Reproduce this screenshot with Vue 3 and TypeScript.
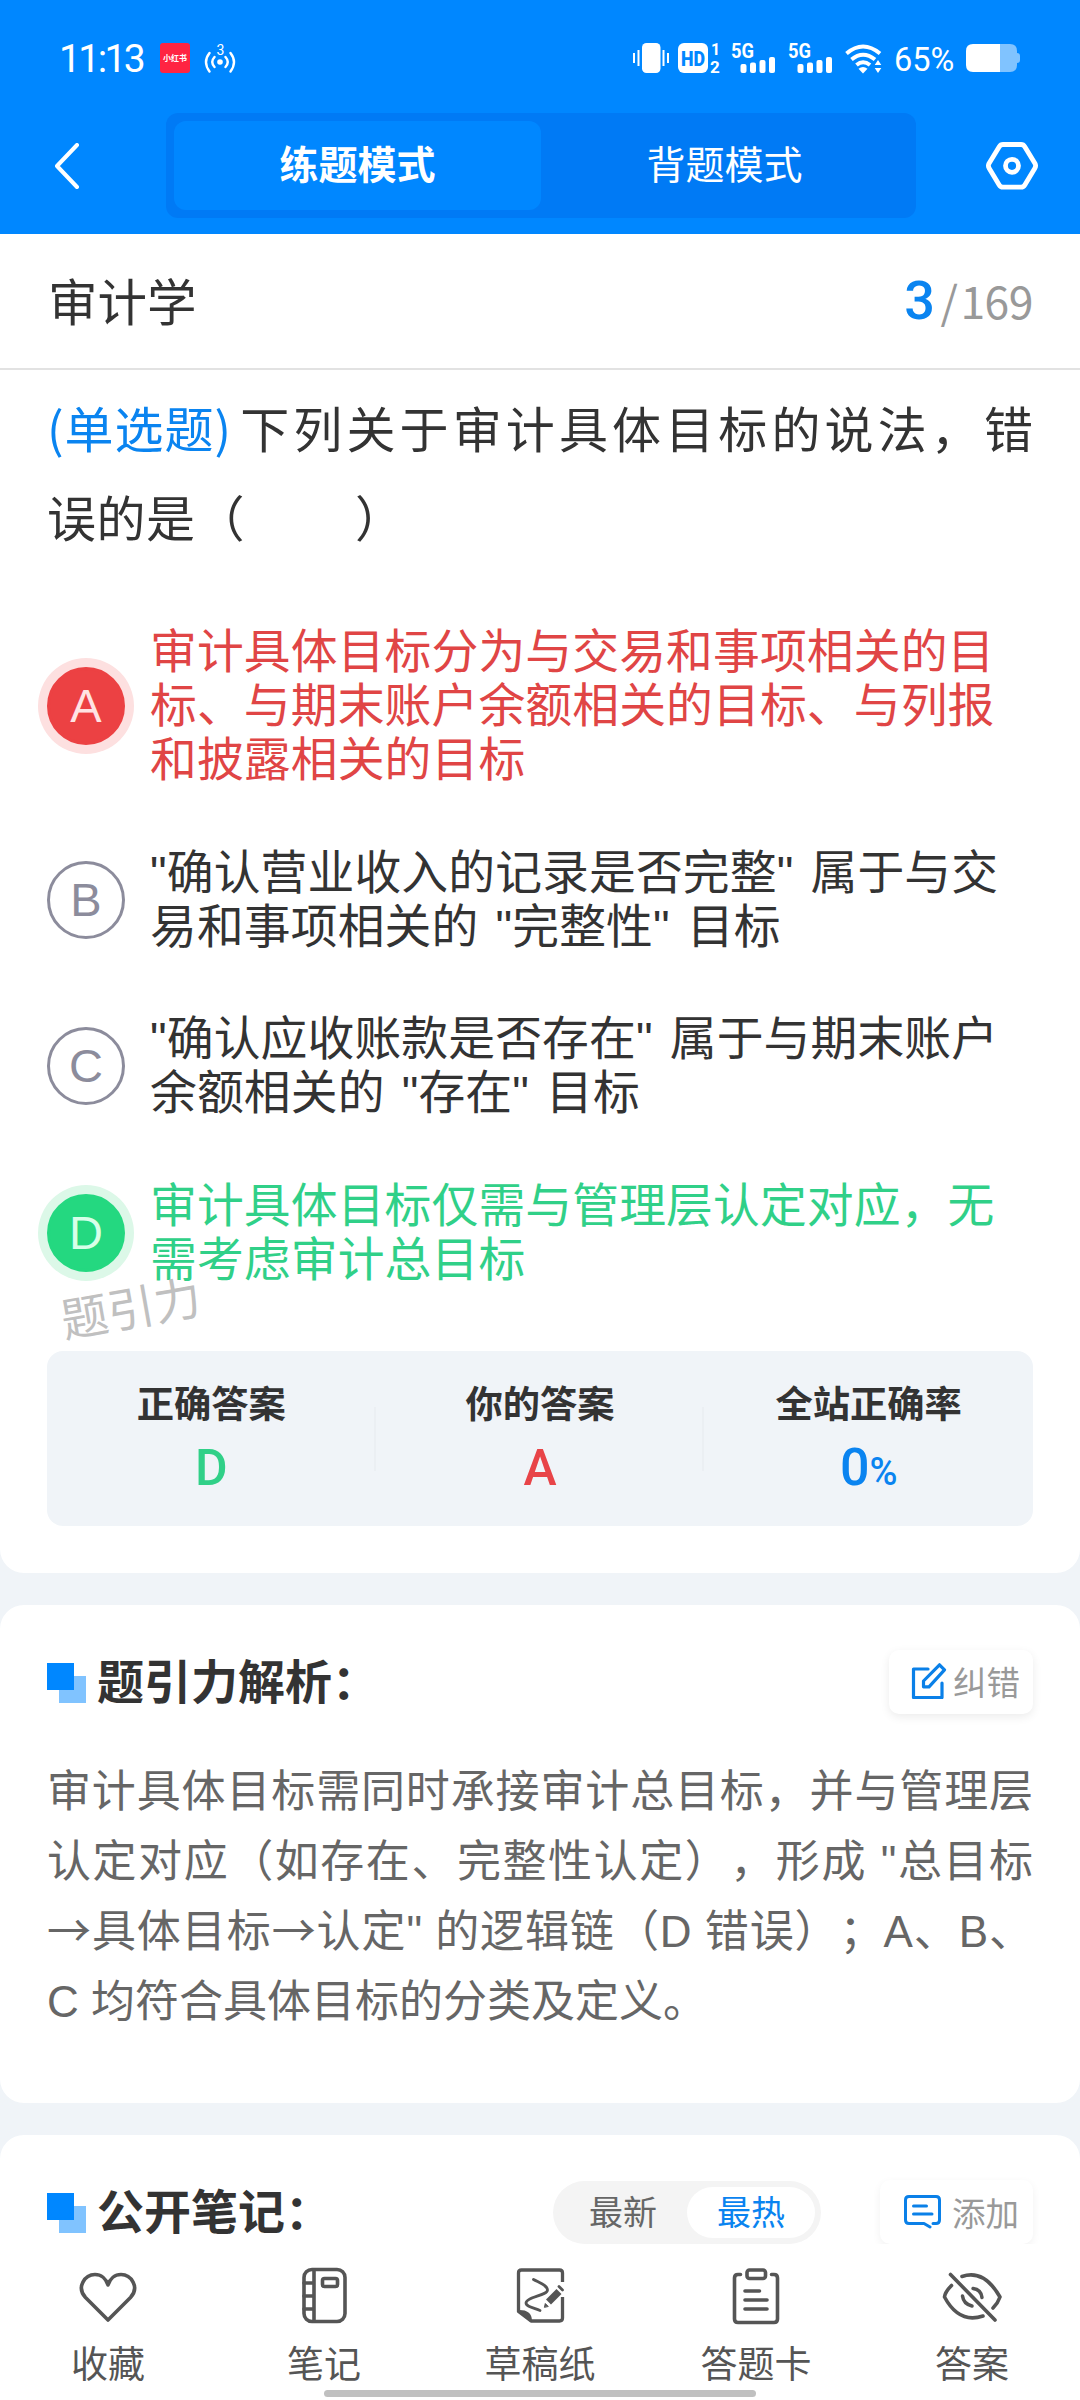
<script setup lang="ts">
interface Option {
  key: string
  state: 'wrong' | 'right' | 'plain'
  lines: string[]
}

const options: Option[] = [
  {
    key: 'A',
    state: 'wrong',
    lines: ['审计具体目标分为与交易和事项相关的目', '标、与期末账户余额相关的目标、与列报', '和披露相关的目标'],
  },
  { key: 'B', state: 'plain', lines: ['"确认营业收入的记录是否完整" 属于与交', '易和事项相关的 "完整性" 目标'] },
  { key: 'C', state: 'plain', lines: ['"确认应收账款是否存在" 属于与期末账户', '余额相关的 "存在" 目标'] },
  { key: 'D', state: 'right', lines: ['审计具体目标仅需与管理层认定对应，无', '需考虑审计总目标'] },
]
const signals = [0, 1]
</script>

<template>
  <div class="screen">
    <header class="top">
      <div class="status">
        <div class="status-left">
          <span class="time">11:13</span>
          <span class="app-badge">小红书</span>
          <svg class="hotspot" width="32" height="34" viewBox="0 -2 32 34" fill="none" stroke="#fff" stroke-width="2.4" stroke-linecap="round">
            <circle cx="16" cy="19" r="2.8" fill="#fff" stroke="none" />
            <path d="M10.500 14q-4.500 5 0 10M21.500 14q4.500 5 0 10M5.500 10q-7 9 0 18.500M26.500 10q7 9 0 18.500" />
            <text x="16.500" y="11.500" font-size="14" text-anchor="middle" fill="#fff" stroke="none" font-family="Roboto, sans-serif">3</text>
          </svg>
        </div>
        <div class="status-right">
          <svg width="36" height="32" viewBox="0 0 36 32" fill="#fff">
            <rect x="9" y="1" width="18.500" height="30" rx="4.500" />
            <path d="M0 11h2v10H0zM4.500 8h2v16h-2zM29.500 8h2v16h-2zM34 11h2v10h-2z" />
          </svg>
          <svg class="hd" width="44" height="36" viewBox="0 -2 44 36" font-family="Roboto, sans-serif" font-weight="900">
            <rect x="0" y="1" width="30" height="30" rx="6" fill="#fff" />
            <text x="15" y="23.500" font-size="20" text-anchor="middle" textLength="24" lengthAdjust="spacingAndGlyphs" fill="#0087ff">HD</text>
            <text x="33" y="13" font-size="16" font-weight="700" fill="#fff">1</text>
            <text x="32" y="31" font-size="17" font-weight="700" fill="#fff">2</text>
          </svg>
          <svg v-for="s in signals" :key="s" class="signal" width="44" height="40" viewBox="0 -4 44 40" fill="#fff">
            <text x="0" y="15.500" font-size="20" font-weight="700" textLength="23" lengthAdjust="spacingAndGlyphs" font-family="Roboto, sans-serif">5G</text>
            <rect x="9.500" y="22" width="6" height="9" rx="2" />
            <rect x="19" y="20.500" width="6" height="10.500" rx="2" />
            <rect x="28.500" y="18" width="6" height="13" rx="2" />
            <rect x="38" y="15" width="6" height="16" rx="2" />
          </svg>
          <svg class="wifi" width="38" height="32" viewBox="0 0 38 32" fill="none" stroke="#fff" stroke-width="4">
            <path d="M1.500 11.500Q18 -2.500 35 11.500" />
            <path d="M6.500 17.500Q18 8 30 17.500" />
            <path d="M11.500 23Q18 17.500 25 23" />
            <path d="M13.500 26.800q4.500-3.500 9 0L18 31.500z" fill="#fff" stroke="none" />
            <path d="M33 18l3.300 5h-6.600zM33 31l3.300-5h-6.600z" fill="#fff" stroke="none" />
          </svg>
          <span class="percent">65%</span>
          <svg width="54" height="28" viewBox="0 0 54 28">
            <path d="M34 0h10q7 0 7 7v2q3 0 3 3v4q0 3-3 3v2q0 7-7 7H34z" fill="#80c3ff" />
            <path d="M7 0h27v28H7q-7 0-7-7V7q0-7 7-7z" fill="#fff" />
          </svg>
        </div>
      </div>
      <div class="nav">
        <svg class="back" width="26" height="46" viewBox="0 0 26 46" fill="none" stroke="#fff" stroke-width="4" stroke-linecap="round" stroke-linejoin="round">
          <path d="M23 2L3 23l20 21" />
        </svg>
        <div class="modes">
          <span class="mode active">练题模式</span>
          <span class="mode">背题模式</span>
        </div>
        <svg class="gear" width="54" height="50" viewBox="0 0 54 50" fill="none" stroke="#fff" stroke-width="4.800" stroke-linejoin="round">
          <path d="M18 3.500h18q2.500 0 3.800 2.200L50 22.500q1.200 2.200 0 4.500L39.800 44q-1.300 2.200-3.800 2.200H18q-2.500 0-3.800-2.200L4 27q-1.200-2.300 0-4.500L14.200 5.700Q15.500 3.500 18 3.500z" />
          <circle cx="27" cy="24.800" r="6.500" />
        </svg>
      </div>
    </header>

    <main class="content">
      <div class="subject">
        <span>审计学</span>
        <span class="progress"><b>3</b><i>/</i>169</span>
      </div>

      <section class="card question">
        <div class="stem">
          <div class="line full"><span class="kind">(单选题)</span>下列关于审计具体目标的说法，错</div>
          <div class="line last">误的是（<span class="blank"></span>）</div>
        </div>
        <ul class="options">
          <li v-for="o in options" :key="o.key" :class="['option', o.state]">
            <span class="mark">{{ o.key }}</span>
            <div class="text">
              <div v-for="l in o.lines" :key="l">{{ l }}</div>
            </div>
          </li>
        </ul>
        <div class="result">
          <span class="watermark">题引力</span>
          <div class="cell"><b>正确答案</b><span class="value green">D</span></div>
          <div class="cell"><b>你的答案</b><span class="value red">A</span></div>
          <div class="cell"><b>全站正确率</b><span class="value blue">0<small>%</small></span></div>
        </div>
      </section>

      <section class="card analysis">
        <div class="head">
          <span class="squares"></span>
          <h2>题引力解析：</h2>
          <button class="action">
            <svg width="36" height="36" viewBox="0 0 36 36" fill="none" stroke="#0a80e8" stroke-width="3.200" stroke-linejoin="round" stroke-linecap="round">
              <path d="M17 6H2.500v28.500H31V20" />
              <path d="M28.500 1.800l5 5L18 23.800h-5.500V18z" />
            </svg>
            纠错
          </button>
        </div>
        <div class="para">
          <div class="full">审计具体目标需同时承接审计总目标，并与管理层</div>
          <div class="full">认定对应（如存在、完整性认定），形成 "总目标</div>
          <div class="full"><span class="cjk">→具体目标→认定</span>" 的逻辑链（D 错误）；A、B、</div>
          <div>C 均符合具体目标的分类及定义。</div>
        </div>
      </section>

      <section class="card notes">
        <div class="head">
          <span class="squares"></span>
          <h2>公开笔记：</h2>
          <div class="sort"><span>最新</span><span class="on">最热</span></div>
          <button class="action add">
            <svg width="37" height="34" viewBox="0 0 37 34" fill="none" stroke="#0a80e8" stroke-width="3" stroke-linejoin="round" stroke-linecap="round">
              <path d="M29 28.500h3q3.500 0 3.500-3.500V5q0-3.500-3.500-3.500H5Q1.500 1.500 1.500 5v20q0 3.500 3.500 3.500h15l6 3.500" />
              <path d="M9.500 11h13M9.500 19h18.500" />
            </svg>
            添加
          </button>
        </div>
      </section>
    </main>

    <footer class="tabs">
      <div class="tab">
        <svg width="60" height="60" viewBox="0 0 60 60">
          <path d="M30 54L7.500 31.500C-2 21 7 8.500 17 8.500c6 0 11 4 13 10.500 2-6.500 7-10.500 13-10.500 10 0 19 12.500 9.500 23z" />
        </svg>
        <span>收藏</span>
      </div>
      <div class="tab">
        <svg width="60" height="60" viewBox="0 0 60 60">
          <rect x="10" y="3.500" width="41" height="52" rx="8" />
          <path d="M20 4v51M10 17h10M10 30h10M10 43h10" />
          <rect x="28.500" y="12.500" width="15" height="8" rx="2" />
        </svg>
        <span>笔记</span>
      </div>
      <div class="tab">
        <svg width="60" height="60" viewBox="0 0 60 60">
          <path d="M52.500 16V7q0-3-3-3H11.500q-3 0-3 3v38.500L21 55h28.500q3 0 3-3V31" stroke-width="3.300" stroke-linecap="butt" />
          <path d="M8.500 45q12.500-.500 12.500 10z" fill="#555" stroke-width="2" />
          <path d="M23.500 13.500C30 17 37.500 19.500 37.500 24c0 5.500-21.500 7-21.500 13 0 3.500 8 5 14 7.500" stroke-width="2.800" />
          <path d="M38.500 36L49 25.500" stroke-width="7" stroke-linecap="butt" />
          <path d="M49 20.500l3.500 3.500" stroke-width="2.800" />
          <path d="M34.500 41l.8-3.500 2.700 2.700z" fill="#555" stroke-width="1" />
        </svg>
        <span>草稿纸</span>
      </div>
      <div class="tab">
        <svg width="60" height="60" viewBox="0 0 60 60">
          <path d="M14.500 8.500H12q-3.500 0-3.500 3.500v41q0 3.500 3.500 3.500h36q3.500 0 3.500-3.500V12q0-3.500-3.500-3.500h-2.500" />
          <rect x="21" y="4" width="18.500" height="8.500" rx="2.500" />
          <path d="M19 25h14.500M19 34h22M19 43h22" />
        </svg>
        <span>答题卡</span>
      </div>
      <div class="tab">
        <svg width="60" height="60" viewBox="0 0 60 60">
          <path d="M20 10.500Q42 3 58 31 56 37 51 42M9.500 19.500Q3 26 2.500 31 17 58 41 50" />
          <path d="M31 22.500q8 1 9 9M20.500 30q1 8 9.500 10" stroke-width="3.500" />
          <path d="M8.500 8.500L53 54" />
        </svg>
        <span>答案</span>
      </div>
      <span class="home-bar"></span>
    </footer>
  </div>
</template>

<style>
body {
  margin: 0;
}
</style>

<style scoped>
.screen {
  width: 1080px;
  height: 2400px;
  overflow: hidden;
  display: flex;
  flex-direction: column;
  background: #f0f4f8;
  color: #333;
  font-family: 'Noto Sans CJK SC', sans-serif;
  text-spacing-trim: space-all;
}
.top {
  height: 234px;
  flex: none;
  background: #0087ff;
  color: #fff;
}
.status {
  height: 113px;
  display: flex;
  justify-content: space-between;
  box-sizing: border-box;
  padding: 42px 60px 0 59px;
}
.status-left,
.status-right {
  display: flex;
  align-items: center;
  height: 32px;
}
.time {
  width: 101px;
  font: 400 39px/34px Roboto, sans-serif;
  letter-spacing: -2.600px;
  padding-top: 2px;
  white-space: nowrap;
}
.app-badge {
  width: 30px;
  height: 30px;
  border-radius: 3px;
  background: #ff2442;
  font-size: 8px;
  font-weight: 700;
  line-height: 29px;
  text-align: center;
  white-space: nowrap;
}
.hotspot {
  margin-left: 14px;
}
.hd {
  margin-left: 9px;
}
.signal {
  margin-left: 9px;
}
.signal + .signal {
  margin-left: 13px;
}
.wifi {
  margin-left: 13px;
}
.percent {
  width: 72px;
  margin-left: 11px;
  font: 400 32.500px/32px Roboto, sans-serif;
  padding-top: 3px;
  box-sizing: border-box;
}
.nav {
  display: flex;
  align-items: center;
  height: 105px;
  padding: 0 41px 0 54px;
}
.modes {
  display: flex;
  width: 734px;
  height: 89px;
  margin-left: 86px;
  padding: 8px;
  border-radius: 12px;
  background: #007af5;
}
.mode {
  flex: 1;
  font-size: 39px;
  line-height: 82px;
  text-align: center;
}
.mode.active {
  border-radius: 12px;
  background: #0087ff;
  font-weight: 700;
}
.gear {
  margin-left: auto;
}
.content {
  flex: 1;
  min-height: 0;
  overflow: hidden;
}
.subject {
  display: flex;
  justify-content: space-between;
  align-items: center;
  height: 134px;
  padding: 0 47px;
  background: #fff;
  border-bottom: 2px solid #e2e2e2;
  font-size: 49.500px;
  line-height: 134px;
}
.subject > span:first-child {
  position: relative;
  top: -1px;
  left: 1px;
}
.progress {
  display: flex;
  align-items: baseline;
  color: #999;
  font-size: 44.500px;
  letter-spacing: -0.500px;
}
.progress b {
  font: 500 54px/140px Roboto, sans-serif;
  color: #0a84f0;
}
.progress i {
  font-style: normal;
  margin: 0 3px 0 6px;
}
.card {
  background: #fff;
  border-radius: 24px;
  box-sizing: border-box;
  padding: 0 47px;
}
.question {
  height: 1203px;
  border-radius: 0 0 24px 24px;
}
.stem {
  padding-top: 12px;
  font-size: 49px;
  line-height: 89px;
  white-space: nowrap;
}
.full {
  text-align: justify;
  text-align-last: justify;
}
.kind {
  display: inline-block;
  width: 189px;
  color: #0a84f0;
  text-align: left;
  text-align-last: left;
  letter-spacing: 1px;
}
.last {
  letter-spacing: 0.500px;
}
.blank {
  display: inline-block;
  width: 110px;
}
.options {
  list-style: none;
  margin: 65px 0 0;
  padding: 0;
  display: flex;
  flex-direction: column;
  gap: 58.500px;
}
.option {
  display: flex;
  align-items: center;
  font-size: 46.800px;
  line-height: 54px;
  white-space: nowrap;
  font-family: 'Liberation Sans', 'Noto Sans CJK SC', sans-serif;
  word-spacing: 4px;
}
.option .text {
  letter-spacing: 0.120px;
}
.mark {
  width: 78px;
  height: 78px;
  box-sizing: border-box;
  flex: none;
  margin-right: 25px;
  border-radius: 50%;
  border: 3px solid #8c8c9c;
  color: #8c8c9c;
  font-size: 47px;
  line-height: 72px;
  text-align: center;
}
.wrong {
  color: #e04545;
}
.wrong .mark {
  border-color: #ec4143;
  background: #ec4143;
  color: #ffe3e3;
  box-shadow: 0 0 0 9px #fde0e0;
}
.right {
  color: #30d088;
}
.right .mark {
  border-color: #24d880;
  background: #24d880;
  color: #d8ffe9;
  box-shadow: 0 0 0 9px #dcf8e8;
}
.result {
  position: relative;
  display: flex;
  height: 175px;
  margin-top: 64.500px;
  border-radius: 16px;
  background: #f0f4f8;
}
.watermark {
  position: absolute;
  left: 13px;
  top: -75px;
  font-size: 47px;
  line-height: 60px;
  color: #c0c0c0;
  transform: rotate(-10deg);
}
.cell {
  flex: 1;
  display: flex;
  flex-direction: column;
  align-items: center;
  position: relative;
}
.cell + .cell::before {
  content: '';
  position: absolute;
  left: -2px;
  top: 56px;
  width: 2px;
  height: 64px;
  background: #ebeff3;
}
.cell b {
  margin-top: 21px;
  font-size: 37.300px;
  line-height: 60px;
}
.value {
  font: 500 50px/64px Roboto, sans-serif;
  margin-top: 4px;
}
.value.blue {
  font-size: 52px;
}
.value small {
  font-size: 38px;
  font-weight: 500;
}
.green {
  color: #30d088;
}
.red {
  color: #e84448;
}
.blue {
  color: #0a84f0;
}
.analysis {
  height: 498px;
  margin-top: 32px;
  padding-top: 42px;
}
.head {
  display: flex;
  align-items: center;
  height: 70px;
}
.squares {
  position: relative;
  top: 1px;
  width: 39px;
  height: 40px;
  margin-right: 11px;
}
.squares::before,
.squares::after {
  content: '';
  position: absolute;
  width: 27px;
  height: 27px;
}
.squares::before {
  right: 0;
  bottom: 0;
  background: #80c3ff;
}
.squares::after {
  left: 0;
  top: 0;
  background: #0087ff;
}
h2 {
  margin: 0;
  padding-bottom: 6px;
  font-size: 47px;
  line-height: 66px;
  font-weight: 700;
}
.action {
  display: flex;
  align-items: center;
  width: 144px;
  height: 64px;
  margin-left: auto;
  box-sizing: border-box;
  padding: 0 0 3px 22px;
  border: 0;
  border-radius: 10px;
  background: #fff;
  box-shadow: 0 3px 10px rgba(0, 0, 0, 0.08);
  color: #999;
  font: 400 33.500px/60px 'Noto Sans CJK SC', sans-serif;
  white-space: nowrap;
  gap: 6px;
}
.para {
  margin-top: 40px;
  font-family: 'Liberation Sans', 'Noto Sans CJK SC', sans-serif;
  font-size: 44px;
  line-height: 70px;
  color: #666;
  white-space: nowrap;
}
.cjk {
  font-family: 'Noto Sans CJK SC', sans-serif;
  line-height: 0;
}
.notes {
  height: 200px;
  margin-top: 32px;
  padding-top: 42px;
  border-radius: 24px 24px 0 0;
}
.sort {
  display: flex;
  width: 268px;
  height: 63px;
  margin-left: auto;
  box-sizing: border-box;
  padding: 6px;
  border-radius: 32px;
  background: #f4f4f4;
  font-size: 34px;
  line-height: 48px;
  color: #666;
}
.sort span {
  flex: 1;
  border-radius: 26px;
  text-align: center;
}
.sort .on {
  background: #fff;
  color: #0a84f0;
}
.add {
  width: 153px;
  margin-left: 59px;
  padding: 0 0 0 24px;
  gap: 11px;
  box-shadow: 0 3px 8px rgba(0, 0, 0, 0.06);
}
.tabs {
  position: relative;
  flex: none;
  display: flex;
  height: 156px;
  background: #fff;
}
.tab {
  flex: 1;
  display: flex;
  flex-direction: column;
  align-items: center;
  padding-top: 22px;
  font-size: 37px;
  line-height: 60px;
  color: #555;
}
.tab svg {
  fill: none;
  stroke: #555;
  stroke-width: 3.600;
  stroke-linecap: round;
  stroke-linejoin: round;
}
.tab span {
  margin-top: 6px;
}
.home-bar {
  position: absolute;
  left: 324px;
  bottom: 3px;
  width: 432px;
  height: 7px;
  border-radius: 4px;
  background: #c0c0c0;
}
</style>
